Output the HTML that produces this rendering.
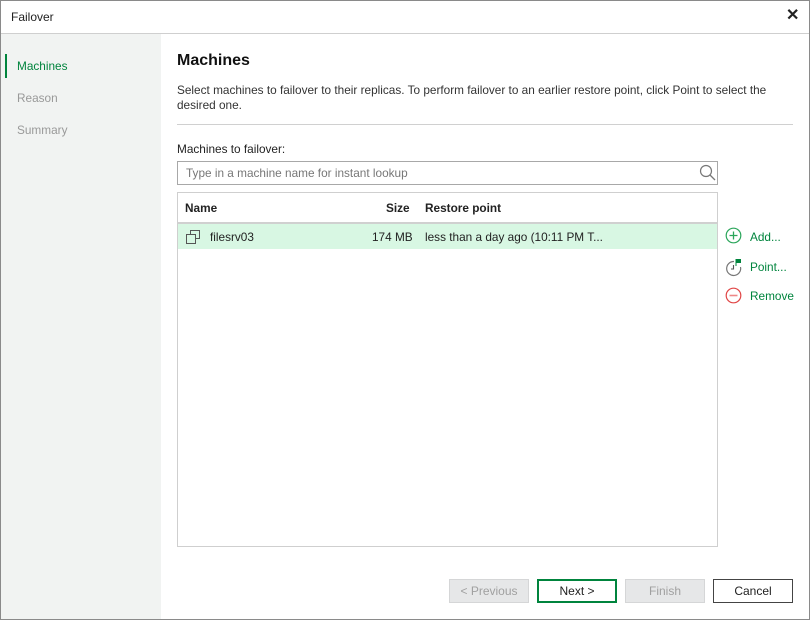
<!DOCTYPE html>
<html><head><style>
*{box-sizing:border-box;margin:0;padding:0}
body{width:810px;height:620px;font-family:"Liberation Sans",sans-serif;font-size:11.8px;color:#222;background:#fff;position:relative;overflow:hidden}
.win{position:absolute;left:0;top:0;width:810px;height:620px;border:1px solid #8a8a8a}
.abs{position:absolute}
.btn{position:absolute;top:579px;width:80px;height:24px;text-align:center;line-height:22px;font-size:12px}
</style></head><body>
<div class="win"></div>
<div class="abs" style="left:11px;top:10px;font-size:12px">Failover</div>
<div class="abs" style="left:786px;top:5px;font-size:16px;font-weight:bold">✕</div>
<div class="abs" style="left:1px;top:33px;width:808px;height:1px;background:#cfcfcf"></div>
<div class="abs" style="left:1px;top:34px;width:160px;height:585px;background:#f1f3f2"></div>
<div class="abs" style="left:5px;top:54px;width:2px;height:24px;background:#00843d"></div>
<div class="abs" style="left:17px;top:59px;color:#00843d">Machines</div>
<div class="abs" style="left:17px;top:91px;color:#999">Reason</div>
<div class="abs" style="left:17px;top:123px;color:#999">Summary</div>
<div class="abs" style="left:177px;top:52px;font-size:16px;font-weight:bold;color:#111">Machines</div>
<div class="abs" style="left:177px;top:83px;width:610px;line-height:15px;color:#333">Select machines to failover to their replicas. To perform failover to an earlier restore point, click Point to select the desired one.</div>
<div class="abs" style="left:177px;top:124px;width:616px;height:1px;background:#d0d0d0"></div>
<div class="abs" style="left:177px;top:142px">Machines to failover:</div>
<div class="abs" style="left:177px;top:161px;width:541px;height:24px;border:1px solid #a8a8a8"></div>
<div class="abs" style="left:186px;top:166px;color:#777">Type in a machine name for instant lookup</div>
<svg class="abs" style="left:698px;top:163px" width="20" height="20"><circle cx="8" cy="8" r="5.5" fill="none" stroke="#777" stroke-width="1.2"/><line x1="12" y1="12" x2="17" y2="17" stroke="#777" stroke-width="1.3"/></svg>
<div class="abs" style="left:177px;top:192px;width:541px;height:355px;border:1px solid #cfcfcf"></div>
<div class="abs" style="left:185px;top:201px;font-weight:bold">Name</div>
<div class="abs" style="left:386px;top:201px;font-weight:bold">Size</div>
<div class="abs" style="left:425px;top:201px;font-weight:bold">Restore point</div>
<div class="abs" style="left:178px;top:222px;width:539px;height:2px;background:#d0d0d0"></div>
<div class="abs" style="left:178px;top:224px;width:539px;height:25px;background:#d8f7e3"></div>
<svg class="abs" style="left:185px;top:229px" width="16" height="16"><rect x="5.5" y="1.5" width="9" height="8" fill="none" stroke="#555"/><rect x="1.5" y="5.5" width="9" height="9" fill="#d8f7e3" stroke="#555"/></svg>
<div class="abs" style="left:210px;top:230px">filesrv03</div>
<div class="abs" style="left:372px;top:230px">174 MB</div>
<div class="abs" style="left:425px;top:230px">less than a day ago (10:11 PM T...</div>
<svg class="abs" style="left:725px;top:227px" width="18" height="18"><circle cx="8.5" cy="8.5" r="7.3" fill="none" stroke="#2aa55a" stroke-width="1.2"/><path d="M8.5 4.5v8M4.5 8.5h8" stroke="#2aa55a" stroke-width="1.3"/></svg>
<div class="abs" style="left:750px;top:230px;color:#00843d">Add...</div>
<svg class="abs" style="left:725px;top:257px" width="18" height="20"><path d="M9 4.5A7 7 0 1 0 15.5 10" fill="none" stroke="#777" stroke-width="1.2"/><path d="M8.5 8v4h-2.5" fill="none" stroke="#555" stroke-width="1.1"/><rect x="11" y="2" width="5" height="4" fill="#00843d"/><line x1="11" y1="2" x2="11" y2="9" stroke="#00843d"/></svg>
<div class="abs" style="left:750px;top:260px;color:#00843d">Point...</div>
<svg class="abs" style="left:725px;top:287px" width="18" height="18"><circle cx="8.5" cy="8.5" r="7.3" fill="none" stroke="#e04545" stroke-width="1.2"/><path d="M4.5 8.5h8" stroke="#e88" stroke-width="1.6"/></svg>
<div class="abs" style="left:750px;top:289px;color:#00843d">Remove</div>
<div class="btn" style="left:449px;background:#e6e7e8;border:1px solid #d5d6d7;color:#a0a0a0">&lt; Previous</div>
<div class="btn" style="left:537px;border:2px solid #00843d;line-height:20px">Next &gt;</div>
<div class="btn" style="left:625px;background:#e6e7e8;border:1px solid #d5d6d7;color:#a0a0a0">Finish</div>
<div class="btn" style="left:713px;border:1px solid #444">Cancel</div>
</body></html>
